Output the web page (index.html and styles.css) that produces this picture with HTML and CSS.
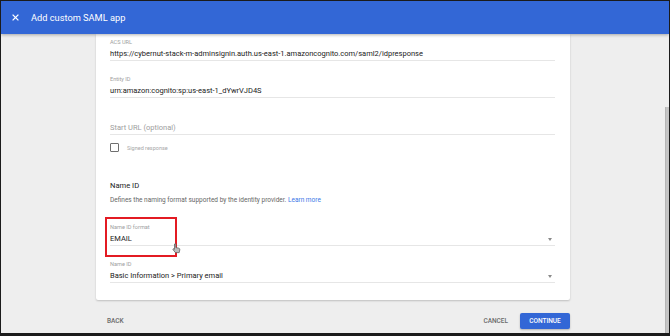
FILE: index.html
```html
<!DOCTYPE html>
<html>
<head>
    <meta charset="UTF-8">
    <title>Add custom SAML app</title>
    <link rel="stylesheet" href="styles.css">
</head>
<body>
    <div class="window">
        <header class="app-bar">
            <svg class="close-icon" width="7" height="7" viewBox="0 0 7 7">
                <path d="M0.6 0.6 L6.4 6.4 M6.4 0.6 L0.6 6.4" stroke="#fff" stroke-width="1.3" fill="none"/>
            </svg>
            <h1>Add custom SAML app</h1>
        </header>

        <main class="content">
            <div class="column">
                <div class="card">
                    <div class="field">
                        <label>ACS URL</label>
                        <div class="value">https://cybernut-stack-m-adminsignin.auth.us-east-1.amazoncognito.com/saml2/idpresponse</div>
                    </div>
                    <div class="field">
                        <label>Entity ID</label>
                        <div class="value">urn:amazon:cognito:sp:us-east-1_dYwrVJD4S</div>
                    </div>
                    <div class="field">
                        <label>&nbsp;</label>
                        <div class="value placeholder">Start URL (optional)</div>
                    </div>
                    <div class="checkbox-row">
                        <span class="checkbox"></span>
                        <span>Signed response</span>
                    </div>

                    <h2 class="section-title">Name ID</h2>
                    <p class="section-desc">Defines the naming format supported by the identity provider. <a href="#">Learn more</a></p>

                    <div class="field select highlighted">
                        <label>Name ID format</label>
                        <div class="value">EMAIL<span class="arrow"></span></div>
                        <svg class="pointer" width="9" height="11" viewBox="0 0 9 11">
                            <path d="M2.5 1 Q3.3 0.4 3.9 1 L3.9 4.6 L6.8 5.2 Q8 5.5 7.8 6.8 L7.2 9.6 L3.4 9.6 L1 6.6 Q0.7 5.8 1.6 5.7 L2.5 6.3 Z" fill="#bdbdbd" stroke="#616161" stroke-width="0.8"/>
                        </svg>
                    </div>
                    <div class="field select">
                        <label>Name ID</label>
                        <div class="value">Basic Information &gt; Primary email<span class="arrow"></span></div>
                    </div>
                </div>

                <div class="actions">
                    <button class="text-btn">BACK</button>
                    <div class="actions-right">
                        <button class="text-btn">CANCEL</button>
                        <button class="primary-btn">CONTINUE</button>
                    </div>
                </div>
            </div>
            <div class="scrollbar"></div>
        </main>
    </div>
</body>
</html>
```

FILE: styles.css
```css
* {
    margin: 0;
    padding: 0;
    box-sizing: border-box;
}

body {
    background-color: #1b1b1b;
    padding: 1px 1px 3px 1px;
    font-family: Roboto, "Liberation Sans", sans-serif;
}

.window {
    width: 668px;
    height: 332px;
    display: flex;
    flex-direction: column;
    background-color: #eeeeee;
    overflow: hidden;
}

.app-bar {
    height: 33px;
    flex-shrink: 0;
    display: flex;
    align-items: center;
    padding-left: 11px;
    background-color: #3367d6;
    box-shadow: 0 1px 3px rgba(0, 0, 0, 0.3);
    position: relative;
    z-index: 2;
}

.close-icon {
    margin-right: 12px;
}

.app-bar h1 {
    color: #ffffff;
    font-size: 9.25px;
    font-weight: 400;
    line-height: 12px;
}

.content {
    flex: 1;
    position: relative;
}

.column {
    width: 474px;
    margin-left: 95px;
}

.card {
    background-color: #ffffff;
    padding: 4px 15px 17px 14px;
    border-radius: 0 0 2px 2px;
    box-shadow: 0 1px 2px rgba(0, 0, 0, 0.2);
}

.field {
    position: relative;
    margin-top: 14px;
    border-bottom: 1px solid #e6e6e6;
}

.field:first-child {
    margin-top: 0;
}

.field label {
    display: block;
    height: 8px;
    line-height: 8px;
    font-size: 5.6px;
    color: #a0a0a0;
    margin-bottom: 2px;
}

.field .value {
    height: 12px;
    line-height: 12px;
    font-size: 7.5px;
    color: #212121;
    white-space: nowrap;
    display: flex;
    align-items: center;
}

.field .placeholder {
    color: #9e9e9e;
}

.arrow {
    margin-left: auto;
    margin-right: 3px;
    width: 0;
    height: 0;
    border-left: 2.5px solid transparent;
    border-right: 2.5px solid transparent;
    border-top: 3px solid #8a8a8a;
}

.highlighted {
    margin-top: 19px;
}

.highlighted::before {
    content: "";
    position: absolute;
    left: -5px;
    top: -6px;
    width: 68px;
    height: 36px;
    border: 2px solid #e31b23;
}

.pointer {
    position: absolute;
    left: 62px;
    top: 20px;
}

.checkbox-row {
    display: flex;
    align-items: center;
    margin-top: 8px;
    font-size: 5.5px;
    color: #a8a8a8;
}

.checkbox {
    width: 9px;
    height: 9px;
    border: 1.3px solid #6f6f6f;
    border-radius: 1px;
    margin-right: 8px;
}

.section-title {
    margin-top: 29px;
    font-size: 7.6px;
    font-weight: 400;
    line-height: 10px;
    color: #212121;
}

.section-desc {
    margin-top: 5px;
    font-size: 6.5px;
    line-height: 8px;
    color: #666666;
}

.section-desc a {
    color: #3b78e7;
    text-decoration: none;
}

.actions {
    margin-top: 13px;
    height: 16px;
    display: flex;
    justify-content: space-between;
    align-items: center;
}

.actions-right {
    display: flex;
    align-items: center;
}

.text-btn {
    background: none;
    border: none;
    padding: 0 12px 0 11px;
    height: 16px;
    font-family: Roboto, "Liberation Sans", sans-serif;
    font-size: 6.5px;
    font-weight: 500;
    color: #6b6b6b;
}

.primary-btn {
    width: 50px;
    height: 16px;
    background-color: #3367d6;
    border: none;
    border-radius: 2px;
    box-shadow: 0 1px 2px rgba(0, 0, 0, 0.25);
    font-family: Roboto, "Liberation Sans", sans-serif;
    font-size: 6.5px;
    font-weight: 500;
    color: #ffffff;
}

.scrollbar {
    position: absolute;
    right: 0;
    top: 73px;
    bottom: 0;
    width: 4px;
    background-color: #c4c4c4;
    border-left: 1px solid #b5b5b5;
}
```
